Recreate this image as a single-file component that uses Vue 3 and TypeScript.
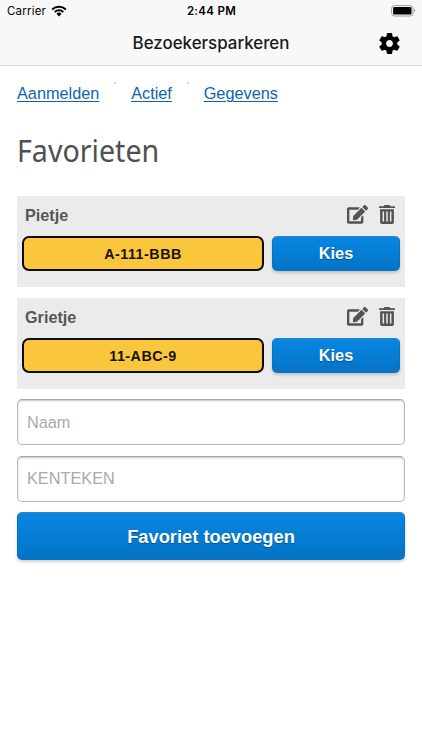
<script setup lang="ts">
import { ref } from 'vue'

interface Favorite {
  name: string
  plate: string
}

const links: string[] = ['Aanmelden', 'Actief', 'Gegevens']
const favorites = ref<Favorite[]>([
  { name: 'Pietje', plate: 'A-111-BBB' },
  { name: 'Grietje', plate: '11-ABC-9' },
])
const newName = ref('')
const newPlate = ref('')

function addFavorite(): void {
  if (!newName.value || !newPlate.value) return
  favorites.value.push({ name: newName.value, plate: newPlate.value.toUpperCase() })
  newName.value = ''
  newPlate.value = ''
}

function removeFavorite(index: number): void {
  favorites.value.splice(index, 1)
}
</script>

<template>
  <div class="screen">
    <header class="header">
      <div class="status">
        <div class="carrier">
          <span>Carrier</span>
          <svg class="wifi" viewBox="0 0 16 12">
            <path d="M1.2 4.5a9.7 9.7 0 0 1 13.6 0" />
            <path d="M3.7 7.1a6.1 6.1 0 0 1 8.6 0" />
            <path class="dot" d="M8 11.4 5.5 8.8a3.6 3.6 0 0 1 5 0z" />
          </svg>
        </div>
        <span class="time">2:44 PM</span>
        <svg class="battery" viewBox="0 0 25 12">
          <rect x="0.6" y="0.6" width="21.4" height="10.4" rx="2.8" fill="#f8f8f8" stroke="#9c9c9c" />
          <rect x="2.1" y="2.1" width="18.4" height="7.4" rx="1.3" fill="#000" />
          <path d="M23.2 4.1c1.3.5 1.3 2.9 0 3.4z" fill="#888" />
        </svg>
      </div>
      <div class="titlebar">
        <span class="title">Bezoekersparkeren</span>
        <svg class="gear" viewBox="0 0 24 24">
          <path d="M19.43 12.98c.04-.32.07-.64.07-.98s-.03-.66-.07-.98l2.11-1.65c.19-.15.24-.42.12-.64l-2-3.46c-.12-.22-.39-.3-.61-.22l-2.49 1c-.52-.4-1.08-.73-1.69-.98l-.38-2.65C14.46 2.18 14.25 2 14 2h-4c-.25 0-.46.18-.49.42l-.38 2.65c-.61.25-1.17.59-1.69.98l-2.49-1c-.23-.09-.49 0-.61.22l-2 3.46c-.13.22-.07.49.12.64l2.11 1.65c-.04.32-.07.65-.07.98s.03.66.07.98l-2.11 1.65c-.19.15-.24.42-.12.64l2 3.46c.12.22.39.3.61.22l2.49-1c.52.4 1.08.73 1.69.98l.38 2.65c.03.24.24.42.49.42h4c.25 0 .46-.18.49-.42l.38-2.65c.61-.25 1.17-.59 1.69-.98l2.49 1c.23.09.49 0 .61-.22l2-3.46c.12-.22.07-.49-.12-.64l-2.11-1.65zM12 15.3c-1.82 0-3.3-1.48-3.3-3.3s1.48-3.3 3.3-3.3 3.3 1.48 3.3 3.3-1.48 3.3-3.3 3.3z" />
        </svg>
      </div>
    </header>

    <main class="content">
      <nav class="links">
        <template v-for="(link, i) in links" :key="link">
          <i v-if="i > 0" class="sep"></i>
          <a href="#">{{ link }}</a>
        </template>
      </nav>

      <h1><span>Favorieten</span></h1>

      <section v-for="(fav, i) in favorites" :key="fav.plate" class="card">
        <div class="card-head">
          <span class="name">{{ fav.name }}</span>
          <svg class="edit" viewBox="0 0 576 512">
            <path d="M402.6 83.2l90.2 90.2c3.8 3.8 3.8 10 0 13.8L274.4 405.6l-92.8 10.3c-12.4 1.4-22.9-9.1-21.5-21.5l10.3-92.8L388.8 83.2c3.8-3.8 10-3.8 13.8 0zm162-22.9l-48.8-48.8c-15.2-15.2-39.9-15.2-55.2 0l-35.4 35.4c-3.8 3.8-3.8 10 0 13.8l90.2 90.2c3.8 3.8 10 3.8 13.8 0l35.4-35.4c15.2-15.3 15.2-40 0-55.2zM384 346.2V448H64V128h229.8c3.2 0 6.2-1.3 8.5-3.5l40-40c7.6-7.6 2.2-20.5-8.5-20.5H48C21.5 64 0 85.5 0 112v352c0 26.5 21.5 48 48 48h352c26.5 0 48-21.5 48-48V306.2c0-10.7-12.9-16-20.5-8.5l-40 40c-2.2 2.3-3.5 5.3-3.5 8.5z" />
          </svg>
          <svg class="trash" viewBox="0 0 16 19" @click="removeFavorite(i)">
            <path d="M5.5 0h5l.9 1.2h4.1q.5 0 .5.5V3.1H0V1.7q0-.5.5-.5h4.1z" />
            <path fill-rule="evenodd" d="M1.1 4.3H14.900V17.2q0 1.7-1.7 1.7H2.8Q1.1 18.9 1.1 17.2zM3.6 6.5V16.500H5.100V6.5zM7.250 6.5V16.500h1.500V6.5zM10.900 6.5V16.500h1.500V6.5z" />
          </svg>
        </div>
        <div class="card-row">
          <div class="plate">{{ fav.plate }}</div>
          <button class="btn choose" type="button">Kies</button>
        </div>
      </section>

      <form class="form" @submit.prevent="addFavorite">
        <input v-model="newName" type="text" placeholder="Naam" />
        <input v-model="newPlate" type="text" placeholder="KENTEKEN" />
        <button class="btn add" type="submit">Favoriet toevoegen</button>
      </form>
    </main>
  </div>
</template>

<style>
body {
  margin: 0;
  background: #fff;
}
</style>

<style scoped>
* {
  box-sizing: border-box;
}
.screen {
  height: 750px;
  overflow: hidden;
  background: #fff;
  font-family: "Liberation Sans", Arial, sans-serif;
}
.header {
  height: 66px;
  background: #f8f8f8;
  border-bottom: 1px solid #d9d9d9;
  font-family: Inter, sans-serif;
  color: #000;
}
.status {
  display: grid;
  grid-template-columns: 1fr auto 1fr;
  align-items: center;
  height: 22px;
  padding: 0 6px 0 7px;
  font-size: 11.5px;
}
.carrier {
  display: flex;
  align-items: center;
  gap: 5px;
  letter-spacing: 0.2px;
}
.wifi {
  width: 16px;
  height: 12px;
  fill: none;
  stroke: #000;
  stroke-width: 2;
}
.wifi .dot {
  fill: #000;
  stroke: none;
}
.time {
  font-weight: 600;
  letter-spacing: 0.3px;
}
.battery {
  justify-self: end;
  width: 25px;
  height: 12px;
}
.titlebar {
  display: grid;
  grid-template-columns: 1fr auto 1fr;
  align-items: center;
  height: 42px;
  padding-right: 20px;
  padding-left: 20px;
}
.title {
  grid-column: 2;
  color: #1a1a1a;
  font-size: 16.9px;
  font-weight: 500;
}
.gear {
  justify-self: end;
  width: 25px;
  height: 25px;
  fill: #000;
}
.content {
  padding: 16px 17px 0;
}
.links {
  display: flex;
  height: 24px;
  line-height: 22px;
  font-size: 16.3px;
}
.links a {
  color: #1064ad;
  text-decoration: underline;
  text-decoration-thickness: 1px;
  text-underline-offset: 2px;
}
.sep {
  width: 2px;
  height: 2px;
  margin: 0 14.9px;
  background: #d4d4d4;
}
h1 {
  margin: 22px 0 24px;
  height: 44px;
  line-height: 44px;
  color: #4c5052;
  font-family: "Noto Sans", sans-serif;
  font-size: 30.5px;
  font-weight: 400;
}
h1 span {
  display: inline-block;
  transform: scaleX(0.938);
  transform-origin: left;
}
.card {
  height: 91px;
  margin-bottom: 11px;
  padding: 0 5px;
  background: #ebebeb;
}
.card + .card {
  margin-bottom: 10.4px;
}
.card-head {
  display: flex;
  align-items: center;
  height: 40px;
  padding: 0 5px 3px 3px;
  color: #545859;
}
.name {
  flex: 1;
  padding-top: 2px;
  font-size: 16.2px;
  font-weight: 700;
}
.edit,
.trash {
  fill: #505456;
}
.edit {
  width: 21px;
  height: 18.7px;
  margin-right: 11px;
}
.trash {
  width: 16px;
  height: 19px;
}
.card-row {
  display: grid;
  grid-template-columns: 242px 128px;
  gap: 8px;
}
.plate {
  display: flex;
  align-items: center;
  justify-content: center;
  height: 35px;
  border: 2px solid #0d0b08;
  border-radius: 7px;
  background: #f9c63c;
  color: #17110a;
  font-size: 14.3px;
  font-weight: 700;
  letter-spacing: 0.5px;
}
.btn {
  display: block;
  margin: 0;
  padding: 0;
  border: 1px solid #0872c2;
  border-top-color: #2e86c4;
  border-radius: 5px;
  background: linear-gradient(#0886e2, #0474c6);
  box-shadow: 0 2px 3px rgba(0, 0, 0, 0.18);
  color: #fff;
  font-family: inherit;
  font-weight: 700;
  text-shadow: 0 1px 1px rgba(0, 0, 0, 0.35);
}
.choose {
  height: 35px;
  font-size: 16.3px;
}
.form {
  display: grid;
  grid-template-rows: 46px 46px 48px;
  row-gap: 10.3px;
}
input {
  width: 100%;
  height: 46px;
  margin: 0;
  padding: 0 9px;
  border: 1px solid #b9b9b9;
  border-top-color: #a6a6a6;
  border-radius: 5px;
  background: #fff;
  box-shadow: inset 0 1px 2px rgba(0, 0, 0, 0.22);
  font-family: inherit;
  font-size: 16.3px;
}
input::placeholder {
  color: #aaa;
  opacity: 1;
}
.add {
  width: 100%;
  padding-top: 2px;
  font-size: 18.3px;
}
</style>
